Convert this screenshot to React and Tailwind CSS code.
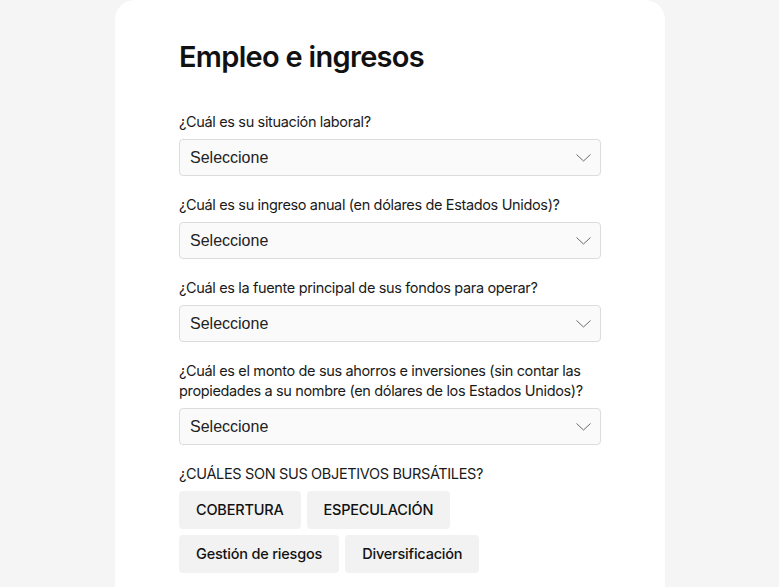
const questions = [
  "¿Cuál es su situación laboral?",
  "¿Cuál es su ingreso anual (en dólares de Estados Unidos)?",
  "¿Cuál es la fuente principal de sus fondos para operar?",
  "¿Cuál es el monto de sus ahorros e inversiones (sin contar las propiedades a su nombre (en dólares de los Estados Unidos)?",
];

function Chevron() {
  return (
    <svg width="15" height="8" viewBox="0 0 15 8" fill="none" className="mr-[-1px]">
      <polyline points="0.5,0.5 7.5,7 14.5,0.5" stroke="#6b6b6b" strokeWidth="1" />
    </svg>
  );
}

function SelectField({ label }) {
  return (
    <div className="mb-[19px]">
      <label className="block text-[14.5px] leading-5 text-[#1a1a1a] mb-[7px] tracking-[-0.35px]">
        {label}
      </label>
      <div className="flex items-center justify-between h-[37px] px-[10px] bg-[#fafafa] border border-[#dcdcdc] rounded-[4px]">
        <span className="text-[16px] text-[#222] font-['Liberation_Sans',Arial,sans-serif]">
          Seleccione
        </span>
        <Chevron />
      </div>
    </div>
  );
}

function Chip({ children }) {
  return (
    <button className="h-[38px] px-[17px] bg-[#f2f2f2] rounded-[4px] text-[14.5px] font-medium text-[#111] tracking-[-0.2px]">
      {children}
    </button>
  );
}

export default function App() {
  return (
    <div className="min-h-[587px] bg-[#f5f5f5] font-['Inter',sans-serif] flex justify-center pl-[1px]">
      <div className="w-[550px] bg-white rounded-t-[20px] px-[64px] pt-[39px] pb-8">
        <h1 className="text-[29px] leading-9 font-semibold text-[#111] tracking-[-0.7px] mb-[37px]">
          Empleo e ingresos
        </h1>
        <div className="w-[422px]">
          {questions.map((q) => (
            <SelectField key={q} label={q} />
          ))}
          <p className="text-[14.5px] leading-5 text-[#1a1a1a] mb-[7px] tracking-[-0.35px]">
            ¿CUÁLES SON SUS OBJETIVOS BURSÁTILES?
          </p>
          <div className="flex flex-col gap-[6px]">
            <div className="flex gap-[6px]">
              <Chip>COBERTURA</Chip>
              <Chip>ESPECULACIÓN</Chip>
            </div>
            <div className="flex gap-[6px]">
              <Chip>Gestión de riesgos</Chip>
              <Chip>Diversificación</Chip>
            </div>
          </div>
        </div>
      </div>
    </div>
  );
}
